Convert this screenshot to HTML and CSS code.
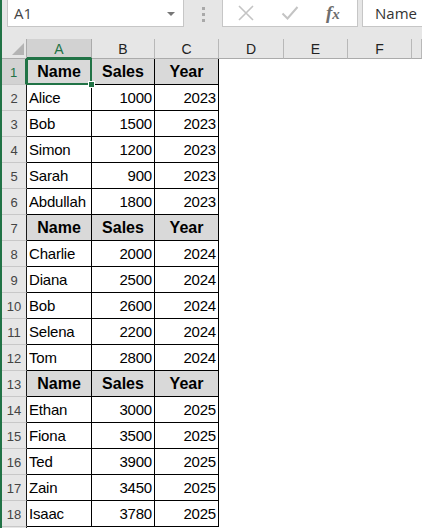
FILE: index.html
```html
<!DOCTYPE html>
<html>
<head>
<meta charset="utf-8">
<link rel="stylesheet" href="styles.css">
</head>
<body>
<div class="app">
  <div class="fbar">
    <div class="namebox"><span class="ref">A1</span><span class="caret"></span></div>
    <div class="grip"><i></i><i></i><i></i></div>
    <div class="fbtns">
      <svg class="ico" width="18" height="16" viewBox="0 0 18 16"><path d="M2 1 L16 15 M16 1 L2 15" stroke="#c4c4c4" stroke-width="1.6" fill="none"/></svg>
      <svg class="ico" width="18" height="16" viewBox="0 0 18 16"><path d="M1.5 8.5 L6.5 13.5 L16.5 2" stroke="#c4c4c4" stroke-width="2" fill="none"/></svg>
      <span class="fx">f<span class="x">x</span></span>
    </div>
    <div class="formula">Name</div>
  </div>
  <div class="sheet">
    <div class="row colhdr">
      <div class="corner"><svg width="24" height="19" viewBox="0 0 24 19"><polygon points="22,4 22,16 10,16" fill="#b4b4b4"/></svg></div>
      <div class="ch sel">A</div><div class="ch">B</div><div class="ch">C</div><div class="ch">D</div><div class="ch">E</div><div class="ch">F</div><div class="ch"></div>
    </div>
    <div class="row"><div class="rh sel">1</div><div class="c h a1">Name<span class="selbox"><span class="handle"></span></span></div><div class="c h">Sales</div><div class="c h">Year</div></div>
    <div class="row"><div class="rh">2</div><div class="c">Alice</div><div class="c n">1000</div><div class="c n">2023</div></div>
    <div class="row"><div class="rh">3</div><div class="c">Bob</div><div class="c n">1500</div><div class="c n">2023</div></div>
    <div class="row"><div class="rh">4</div><div class="c">Simon</div><div class="c n">1200</div><div class="c n">2023</div></div>
    <div class="row"><div class="rh">5</div><div class="c">Sarah</div><div class="c n">900</div><div class="c n">2023</div></div>
    <div class="row"><div class="rh">6</div><div class="c">Abdullah</div><div class="c n">1800</div><div class="c n">2023</div></div>
    <div class="row"><div class="rh">7</div><div class="c h">Name</div><div class="c h">Sales</div><div class="c h">Year</div></div>
    <div class="row"><div class="rh">8</div><div class="c">Charlie</div><div class="c n">2000</div><div class="c n">2024</div></div>
    <div class="row"><div class="rh">9</div><div class="c">Diana</div><div class="c n">2500</div><div class="c n">2024</div></div>
    <div class="row"><div class="rh">10</div><div class="c">Bob</div><div class="c n">2600</div><div class="c n">2024</div></div>
    <div class="row"><div class="rh">11</div><div class="c">Selena</div><div class="c n">2200</div><div class="c n">2024</div></div>
    <div class="row"><div class="rh">12</div><div class="c">Tom</div><div class="c n">2800</div><div class="c n">2024</div></div>
    <div class="row"><div class="rh">13</div><div class="c h">Name</div><div class="c h">Sales</div><div class="c h">Year</div></div>
    <div class="row"><div class="rh">14</div><div class="c">Ethan</div><div class="c n">3000</div><div class="c n">2025</div></div>
    <div class="row"><div class="rh">15</div><div class="c">Fiona</div><div class="c n">3500</div><div class="c n">2025</div></div>
    <div class="row"><div class="rh">16</div><div class="c">Ted</div><div class="c n">3900</div><div class="c n">2025</div></div>
    <div class="row"><div class="rh">17</div><div class="c">Zain</div><div class="c n">3450</div><div class="c n">2025</div></div>
    <div class="row"><div class="rh">18</div><div class="c">Isaac</div><div class="c n">3780</div><div class="c n">2025</div></div>
    <div class="row"><div class="rh"></div></div>
  </div>
</div>
</body>
</html>
```
FILE: styles.css
```css
* { box-sizing: border-box; }
html, body { margin: 0; padding: 0; background: #fff; }
body { font-family: "Liberation Sans", Arial, sans-serif; }

.app {
  width: 422px;
  height: 528px;
  overflow: hidden;
  border-left: 2px solid #217346;
  background: #fff;
}

/* formula bar */
.fbar {
  height: 39px;
  background: #e6e6e6;
  display: flex;
  align-items: flex-start;
}
.namebox {
  margin-left: 5px;
  margin-top: -1px;
  width: 177px;
  height: 28px;
  background: #fff;
  border: 1px solid #c6c6c6;
  display: flex;
  align-items: center;
  justify-content: space-between;
  padding: 0 8px 0 6px;
  font-family: "Open Sans", "Noto Sans", sans-serif;
  font-size: 15px;
  color: #444;
}
.caret {
  width: 0; height: 0;
  border-left: 4px solid transparent;
  border-right: 4px solid transparent;
  border-top: 4px solid #777;
  margin-top: 1px;
}
.grip {
  width: 38px;
  height: 27px;
  display: flex;
  flex-direction: column;
  align-items: center;
  justify-content: center;
  gap: 3px;
  padding-top: 1px;
}
.grip i {
  display: block;
  width: 3px;
  height: 3px;
  background: #a9a9a9;
}
.fbtns {
  margin-top: -1px;
  width: 136px;
  height: 28px;
  background: #fff;
  border: 1px solid #c6c6c6;
  display: flex;
  align-items: center;
  padding-left: 14px;
  gap: 26px;
}
.fx {
  font-family: "Liberation Serif", "DejaVu Serif", serif;
  font-style: italic;
  font-weight: bold;
  font-size: 19px;
  color: #6e6e6e;
  margin-left: 1px;
}
.fx .x { font-size: 15px; }
.formula {
  margin-left: 4px;
  margin-top: -1px;
  flex: 1;
  height: 28px;
  background: #fff;
  border: 1px solid #c6c6c6;
  border-right: none;
  display: flex;
  align-items: center;
  padding-left: 12px;
  font-family: "Open Sans", "Noto Sans", sans-serif;
  font-size: 15px;
  color: #333;
}

/* sheet */
.sheet { display: flex; flex-direction: column; }
.row {
  display: grid;
  grid-template-columns: 25px 65px 63px 64px 65px 64px 64px 1fr;
  height: 26px;
  flex: none;
}
.row.colhdr { height: 20px; }

.corner {
  background: #e6e6e6;
  border-right: 1px solid #ababab;
  border-bottom: 1px solid #ababab;
  display: flex;
}
.ch {
  background: #e6e6e6;
  border-right: 1px solid #b8b8b8;
  border-bottom: 1px solid #ababab;
  display: flex;
  align-items: center;
  justify-content: center;
  font-size: 14px;
  color: #222;
  padding-top: 1px;
}
.ch.sel {
  background: #d2d2d2;
  color: #217346;
  border-bottom: 2px solid #217346;
  border-right-color: #ababab;
}

.rh {
  background: #e6e6e6;
  border-right: 1px solid #1a1a1a;
  border-bottom: 1px solid #c8c8c8;
  display: flex;
  align-items: flex-end;
  justify-content: center;
  font-size: 13px;
  line-height: 16px;
  color: #444;
  padding-bottom: 3px;
}
.rh.sel {
  background: #d2d2d2;
  color: #217346;
  border-right: 2px solid #217346;
}

.c {
  border-right: 1px solid #000;
  border-bottom: 1px solid #000;
  display: flex;
  align-items: center;
  padding: 1px 2px 0 2px;
  font-size: 15px;
  letter-spacing: -0.2px;
  line-height: 18px;
  color: #000;
  white-space: nowrap;
}
.c.n { justify-content: flex-end; }
.c.h {
  background: #d9d9d9;
  font-weight: bold;
  font-size: 16px;
  letter-spacing: 0;
  justify-content: center;
}
.a1 { position: relative; }
.selbox {
  position: absolute;
  left: -1px;
  top: -1px;
  right: -1px;
  bottom: -1px;
  border: 2px solid #217346;
}
.handle {
  position: absolute;
  right: -5px;
  bottom: -5px;
  width: 7px;
  height: 7px;
  background: #217346;
  border: 1px solid #fff;
}
```
